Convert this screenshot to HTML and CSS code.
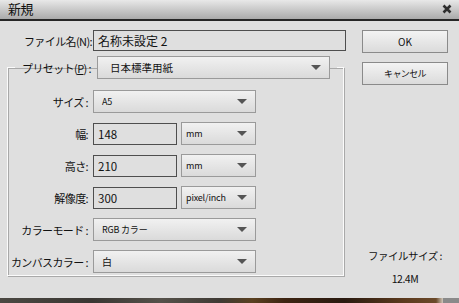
FILE: index.html
```html
<!DOCTYPE html>
<html lang="ja">
<head>
    <meta charset="UTF-8">
    <meta name="viewport" content="width=device-width, initial-scale=1.0">
    <title>新規</title>
    <link rel="stylesheet" href="styles.css">
</head>
<body>
    <div class="dialog">
      <div class="titlebar">
        <span class="title">新規</span>
        <svg class="close" width="10" height="10" viewBox="0 0 10 10">
          <path d="M1.5 1.5 L8.5 8.5 M8.5 1.5 L1.5 8.5" stroke="#2e2e2e" stroke-width="2.6" fill="none"/>
        </svg>
      </div>
      <div class="content">
        <div class="main">
          <div class="name_row">
            <span class="name_label">ファイル名(N):</span>
            <div class="field name_field">名称未設定 2</div>
          </div>
          <fieldset class="preset">
            <legend class="preset_head">
              <span class="preset_label">プリセット(<u>P</u>) :</span>
              <div class="select preset_select"><span>日本標準用紙</span><i class="arrow"></i></div>
            </legend>
            <div class="rows">
              <div class="row">
                <span class="row_label">サイズ :</span>
                <div class="select full"><span class="small">A5</span><i class="arrow"></i></div>
              </div>
              <div class="row">
                <span class="row_label">幅:</span>
                <div class="field num">148</div>
                <div class="select unit"><span class="small">mm</span><i class="arrow"></i></div>
              </div>
              <div class="row">
                <span class="row_label">高さ:</span>
                <div class="field num">210</div>
                <div class="select unit"><span class="small">mm</span><i class="arrow"></i></div>
              </div>
              <div class="row">
                <span class="row_label">解像度:</span>
                <div class="field num">300</div>
                <div class="select unit"><span class="small">pixel/inch</span><i class="arrow"></i></div>
              </div>
              <div class="row">
                <span class="row_label">カラーモード :</span>
                <div class="select full"><span class="small">RGB カラー</span><i class="arrow"></i></div>
              </div>
              <div class="row">
                <span class="row_label">カンバスカラー :</span>
                <div class="select full"><span>白</span><i class="arrow"></i></div>
              </div>
            </div>
          </fieldset>
        </div>
        <div class="side">
          <button class="btn">OK</button>
          <button class="btn cancel">キャンセル</button>
          <div class="size_info">
            <p>ファイルサイズ :</p>
            <p>12.4M</p>
          </div>
        </div>
      </div>
    </div>
    <div class="photo"></div>
</body>
</html>
```

FILE: styles.css
```css
*{
  box-sizing: border-box;
}
body{
  margin: 0;
  width: 459px;
  height: 303px;
  overflow: hidden;
  background-color: #dfdfdf;
  font-family: "Noto Sans CJK JP", "Noto Sans", sans-serif;
  color: #111;
}
.dialog{
  width: 459px;
  height: 298px;
  background-color: #dfdfdf;
}
.titlebar{
  height: 21px;
  display: flex;
  align-items: center;
  justify-content: space-between;
  padding: 0 7px 2px 8px;
  background: linear-gradient(#e8e8e8, #aaaaaa);
  border-bottom: 2px solid #262626;
}
.title{
  font-size: 13px;
  line-height: 19px;
  letter-spacing: -0.5px;
}
.close{
  display: block;
}
.content{
  display: flex;
  gap: 16px;
  height: 277px;
  padding: 9px 0 0 7px;
}
.main{
  width: 339px;
}
.name_row{
  display: flex;
  align-items: center;
  gap: 1px;
  height: 21px;
}
.name_label{
  width: 85px;
  text-align: right;
  font-size: 11px;
  letter-spacing: -0.6px;
  white-space: nowrap;
}
.field{
  height: 22px;
  border: 1px solid #4e4e4e;
  background-color: #dfdfdf;
  font-size: 11.5px;
  line-height: 20px;
  padding: 0 4px;
  white-space: nowrap;
}
.name_field{
  width: 253px;
  height: 21px;
  line-height: 19px;
  font-size: 12px;
}
.preset{
  width: 337px;
  height: 220px;
  margin: 5px 0 0 0;
  padding: 0;
  border: 1px solid #fbfbfb;
  box-shadow: inset 1px 1px 0 #a9a9a9, 1px 1px 0 #a9a9a9;
}
.preset_head{
  display: flex;
  align-items: center;
  margin-left: 7px;
  padding: 0 7px;
}
.preset_label{
  width: 75px;
  font-size: 11px;
  letter-spacing: -0.6px;
  white-space: nowrap;
}
.preset_select{
  width: 233px;
}
.preset_select span{
  font-size: 10.5px;
  padding-left: 4px;
}
.select{
  height: 23px;
  display: flex;
  align-items: center;
  justify-content: space-between;
  padding: 0 8px 0 8px;
  border: 1px solid #9a9a9a;
  background: linear-gradient(#f1f1f1, #dadada);
  font-size: 10px;
  white-space: nowrap;
}
.small{
  font-size: 9px;
  letter-spacing: -0.2px;
}
.arrow{
  width: 0;
  height: 0;
  border-left: 5px solid transparent;
  border-right: 5px solid transparent;
  border-top: 5px solid #555;
}
.rows{
  display: flex;
  flex-direction: column;
  gap: 9px;
  margin-top: 11px;
}
.row{
  display: flex;
  align-items: center;
  height: 23px;
}
.row_label{
  width: 80px;
  margin-right: 5px;
  text-align: right;
  font-size: 11px;
  letter-spacing: -0.6px;
  white-space: nowrap;
}
.full{
  width: 163px;
}
.num{
  width: 84px;
}
.unit{
  width: 75px;
  margin-left: 4px;
  padding-left: 4px;
}
.side{
  width: 86px;
  display: flex;
  flex-direction: column;
  gap: 9px;
  padding-bottom: 8px;
}
.btn{
  height: 23px;
  border: 1px solid #8a8a8a;
  background: linear-gradient(#f3f3f3, #dbdbdb);
  font-family: "Noto Sans CJK JP", "Noto Sans", sans-serif;
  font-size: 10px;
  color: #111;
  padding: 0;
}
.cancel{
  font-size: 9px;
  letter-spacing: -0.6px;
}
.size_info{
  margin-top: auto;
  text-align: center;
  font-size: 10.5px;
  letter-spacing: -0.5px;
}
.size_info p{
  margin: 0;
  line-height: 23px;
}
.photo{
  height: 5px;
  background: linear-gradient(90deg, #4b4842 0%, #3a3733 20%, #55514a 35%, #3f3a34 48%, #5a4020 55%, #3d2412 62%, #2a1a10 75%, #5c3a1e 88%, #6b4a2a 95%, #cfc7bb 96.5%, #8a8a8a 96.6%, #8a8a8a 100%);
}
```
